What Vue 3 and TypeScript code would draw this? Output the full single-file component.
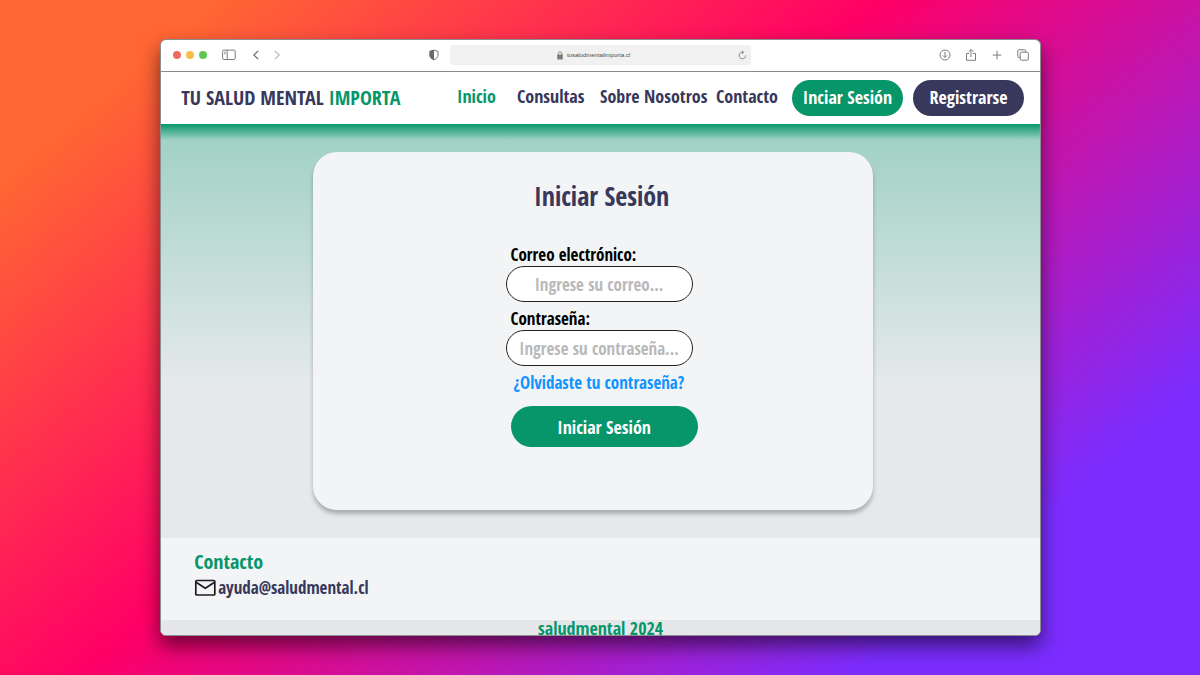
<script setup lang="ts">
import { ref } from 'vue'

interface NavItem {
  label: string
  href: string
}

const navItems: NavItem[] = [
  { label: 'Inicio', href: '#inicio' },
  { label: 'Consultas', href: '#consultas' },
  { label: 'Sobre Nosotros', href: '#nosotros' },
  { label: 'Contacto', href: '#contacto' },
]

const current = ref('Inicio')
const email = ref('')
const password = ref('')
</script>

<template>
  <div class="stage">
    <div class="window">
      <div class="toolbar">
        <div class="tools tools-left">
          <div class="lights">
            <span class="light red"></span>
            <span class="light yellow"></span>
            <span class="light green"></span>
          </div>
          <button type="button" class="tool sidebar" aria-label="Barra lateral">
            <svg width="14" height="12" viewBox="0 0 14 12" fill="none" stroke="#7d7d7d">
              <rect x="0.6" y="1.1" width="12.6" height="9.4" rx="1.3" />
              <path d="M5.2 1.2v9.2" />
              <path d="M2 3.2h1.8M2 4.8h1.8" stroke-width="0.8" />
            </svg>
          </button>
          <button type="button" class="tool back" aria-label="Atrás">
            <svg width="8" height="12" viewBox="0 0 8 12" fill="none" stroke="#666" stroke-width="1.1">
              <path d="M6.2 1.8L1.8 6l4.4 4.2" />
            </svg>
          </button>
          <button type="button" class="tool" aria-label="Adelante">
            <svg width="8" height="12" viewBox="0 0 8 12" fill="none" stroke="#b5b5b5" stroke-width="1.1">
              <path d="M1.8 1.8L6.2 6l-4.4 4.2" />
            </svg>
          </button>
          <button type="button" class="tool shield" aria-label="Privacidad">
            <svg width="10" height="12" viewBox="0 0 10 12">
              <path d="M5 1.200L9 2.400v3.800c0 2-1.600 3.500-4 4.500-2.400-1-4-2.500-4-4.500V2.400z" fill="#fff" stroke="#777" />
              <path d="M5 0.700L.5 2.100v4.100c0 2.300 1.800 3.900 4.500 5z" fill="#6a6a6a" />
            </svg>
          </button>
        </div>
        <div class="address">
          <svg width="6" height="9" viewBox="0 0 6 9">
            <path d="M1.300 4V2.500a1.700 1.700 0 0 1 3.400 0V4" fill="none" stroke="#7d7d7d" stroke-width="0.9" />
            <rect x="0.200" y="3.600" width="5.600" height="4.900" rx="0.700" fill="#7d7d7d" />
          </svg>
          <span>tusaludmentalimporta.cl</span>
          <button type="button" class="tool reload" aria-label="Recargar">
            <svg width="9" height="10" viewBox="0 0 9 10" fill="none" stroke="#7d7d7d" stroke-width="0.9">
              <path d="M5.300 2.300A3.300 3.300 0 1 0 7.700 5.400" />
              <path d="M3.900 0.600L5.700 2.300 3.900 4" />
            </svg>
          </button>
        </div>
        <div class="tools tools-right">
          <button type="button" class="tool" aria-label="Descargas">
            <svg width="12" height="12" viewBox="0 0 12 12" fill="none" stroke="#7d7d7d">
              <circle cx="6" cy="6" r="5" />
              <path d="M6 3v5.400M3.900 6.400L6 8.500l2.100-2.100" />
            </svg>
          </button>
          <button type="button" class="tool" aria-label="Compartir">
            <svg width="12" height="14" viewBox="0 0 12 14" fill="none" stroke="#7d7d7d">
              <path d="M4 5.500H1.500v6.800h9V5.500H8" />
              <path d="M6 9V1.500M3.700 3.700L6 1.400l2.300 2.300" />
            </svg>
          </button>
          <button type="button" class="tool" aria-label="Nueva pestaña">
            <svg width="12" height="12" viewBox="0 0 12 12" fill="none" stroke="#7d7d7d">
              <path d="M6 1.800v8.600M1.700 6.100h8.600" />
            </svg>
          </button>
          <button type="button" class="tool" aria-label="Pestañas">
            <svg width="12" height="12" viewBox="0 0 12 12" fill="none" stroke="#7d7d7d">
              <path d="M3 8.500H2A1.200 1.200 0 0 1 .8 7.300V2A1.200 1.200 0 0 1 2 .8h5.500A1.200 1.200 0 0 1 8.700 2v1" />
              <rect x="3.200" y="3.200" width="8.200" height="8" rx="1.200" />
            </svg>
          </button>
        </div>
      </div>

      <header class="header">
        <a class="brand" href="#inicio">TU SALUD MENTAL <span>IMPORTA</span></a>
        <nav class="nav">
          <a
            v-for="item in navItems"
            :key="item.label"
            :href="item.href"
            :class="{ active: item.label === current }"
            @click="current = item.label"
          >{{ item.label }}</a>
        </nav>
        <div class="actions">
          <button type="button" class="pill primary">Inciar Sesión</button>
          <button type="button" class="pill dark">Registrarse</button>
        </div>
      </header>

      <main class="main">
        <section class="card">
          <h1>Iniciar Sesión</h1>
          <form class="form" @submit.prevent>
            <label for="email">Correo electrónico:</label>
            <input id="email" v-model="email" type="email" placeholder="Ingrese su correo..." />
            <label for="password">Contraseña:</label>
            <input id="password" v-model="password" type="password" placeholder="Ingrese su contraseña..." />
            <a class="forgot" href="#recuperar">¿Olvidaste tu contraseña?</a>
            <button type="submit" class="submit">Iniciar Sesión</button>
          </form>
        </section>
      </main>

      <footer>
        <div class="contact">
          <h2>Contacto</h2>
          <a class="mail" href="mailto:ayuda@saludmental.cl">
            <svg width="22" height="18" viewBox="0 0 22 18" fill="none" stroke="#1d1b20" stroke-width="1.700">
              <rect x="1.800" y="1.500" width="19" height="14.500" rx="1" />
              <path d="M2 3.200l9.300 6 9.300-6" />
            </svg>
            <span>ayuda@saludmental.cl</span>
          </a>
        </div>
        <p class="copyright">saludmental 2024</p>
      </footer>
    </div>
  </div>
</template>

<style>
body {
  margin: 0;
}
</style>

<style scoped>
* {
  box-sizing: border-box;
}

.stage {
  min-height: 100vh;
  padding: 39px 13.25% 39px 13.35%;
  background: linear-gradient(140deg, #ff6633 11%, #ff0066 44%, #7b2dff 83%);
  font-family: 'Open Sans Condensed', 'Roboto Condensed', 'Open Sans', sans-serif;
  font-weight: 700;
  font-size: 18px;
  color: #37385b;
}

.window {
  border: 1px solid #8d8d8f;
  border-radius: 6px;
  overflow: hidden;
  background: #fff;
  box-shadow: 0 10px 20px rgba(0, 0, 0, 0.55);
}

a {
  color: inherit;
  text-decoration: none;
}

button {
  border: 0;
  font: inherit;
  cursor: pointer;
}

.toolbar {
  display: grid;
  grid-template-columns: 1fr 301px 1fr;
  align-items: center;
  height: 32px;
  padding-bottom: 1px;
  border-bottom: 1px solid #8a8a8a;
}

.tools,
.lights {
  display: flex;
  align-items: center;
}

.tools-left {
  padding: 0 11px 0 12px;
}

.tools-right {
  justify-content: flex-end;
  gap: 14px;
  padding-right: 11px;
}

.lights {
  gap: 5px;
}

.light {
  width: 8px;
  height: 8px;
  border-radius: 50%;
}

.red {
  background: #ed6a5e;
}

.yellow {
  background: #f5bf4f;
}

.green {
  background: #61c554;
}

.tool {
  display: flex;
  padding: 0;
  background: none;
}

.sidebar {
  margin: 0 16px 0 15px;
}

.back {
  margin-right: 13px;
}

.shield {
  margin-left: auto;
}

.address {
  position: relative;
  display: flex;
  align-items: center;
  justify-content: center;
  gap: 4px;
  height: 20px;
  padding-right: 14px;
  border-radius: 3px;
  background: #f1f1f1;
  font: 400 6px 'Liberation Sans', sans-serif;
  color: #4c4c4c;
}

.reload {
  position: absolute;
  right: 4px;
}

.header {
  display: flex;
  align-items: center;
  height: 52px;
  padding: 0 16px 0 20px;
  background: #fff;
}

.brand {
  padding-bottom: 2px;
  font-size: 20px;
}

.brand span,
.nav .active {
  color: #069669;
}

.nav {
  display: grid;
  grid-template-columns: 60px 83px 116px auto;
  margin: 0 14px 0 auto;
  padding-bottom: 4px;
}

.actions {
  display: flex;
  gap: 10px;
}

.pill {
  width: 111px;
  height: 36px;
  padding: 0 0 2px;
  border-radius: 18px;
  color: #fff;
}

.primary,
.submit {
  background: #069669;
}

.dark {
  background: #37385b;
}

.main {
  display: flex;
  justify-content: center;
  padding: 28px 16px 28px 0;
  background:
    linear-gradient(#069669, rgba(6, 150, 105, 0)) top / 100% 16px no-repeat,
    linear-gradient(#a2d1c5 16px, #e5e9ec 260px);
}

.card {
  width: 560px;
  padding: 26px 0 63px 18px;
  border-radius: 24px;
  background: #f3f4f6;
  box-shadow: 0 4px 4px rgba(0, 0, 0, 0.25);
}

h1 {
  margin: 0 0 30px;
  font-size: 26px;
  line-height: 36px;
  text-align: center;
}

.form {
  display: flex;
  flex-direction: column;
  width: 192px;
  margin: 0 auto;
  font-size: 17px;
}

label {
  padding-left: 5px;
  line-height: 22px;
  color: #000;
}

input {
  width: 187px;
  height: 36px;
  margin-bottom: 6px;
  padding: 0 8px;
  border: 1px solid #222;
  border-radius: 18px;
  background: #fff;
  font: inherit;
  text-align: center;
}

input::placeholder {
  color: #b9b9b9;
  opacity: 1;
}

.forgot {
  padding-left: 8px;
  line-height: 22px;
  color: #0f94ff;
  white-space: nowrap;
}

.submit {
  height: 41px;
  margin: 12px 0 0 5px;
  border-radius: 21px;
  font-size: 18px;
  color: #fff;
}

.contact {
  height: 82px;
  padding: 11px 33px;
  background: #f3f4f6;
}

h2 {
  margin: 0;
  font-size: 20px;
  line-height: 26px;
  color: #069669;
}

.mail {
  display: inline-flex;
  align-items: center;
  gap: 2px;
  font-size: 17px;
  line-height: 26px;
}

.copyright {
  height: 15px;
  margin: 0;
  overflow: hidden;
  background: #e5e7eb;
  line-height: 17px;
  color: #069669;
  text-align: center;
}
</style>
